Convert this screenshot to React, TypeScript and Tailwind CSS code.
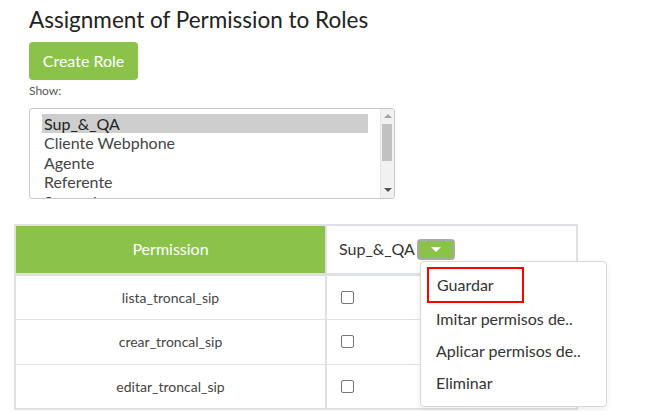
import React from "react";

const rows = ["lista_troncal_sip", "crear_troncal_sip", "editar_troncal_sip"];
const roles = ["Sup_&_QA", "Cliente Webphone", "Agente", "Referente", "Supervisor"];

export default function App() {
  return (
    <div className="w-[645px] h-[411px] overflow-hidden bg-white text-[#333]" style={{ fontFamily: "Lato, 'Open Sans', sans-serif" }}>
      <div className="pl-[29px] pt-[6px]">
        <h1 className="text-[22.5px] leading-[28px] text-[#222] font-normal">Assignment of Permission to Roles</h1>
        <button className="mt-[8px] h-[38px] w-[109px] rounded-[4px] bg-[#8bc34a] text-white text-[16px]">Create Role</button>
        <div className="mt-[2px] text-[12px] leading-[18px] text-[#555]">Show:</div>
        <div className="mt-[8px] relative w-[366px] h-[91px] border border-[#c8c8c8] rounded-[3px] overflow-hidden bg-white">
          <div className="pl-[12px] pr-[26px] pt-[5px]">
            {roles.map((r, i) => (
              <div key={r} className={`h-[19.4px] leading-[19.4px] text-[16px] pl-[2px] ${i === 0 ? "bg-[#cecece] text-[#222]" : "text-[#444]"}`}>{r}</div>
            ))}
          </div>
          <div className="absolute right-0 top-0 bottom-0 w-[14px] bg-[#f1f1f1] border-l border-[#e6e6e6]">
            <div className="absolute left-[3px] top-[5px] w-0 h-0 border-l-[4px] border-r-[4px] border-b-[4px] border-l-transparent border-r-transparent border-b-[#a3a3a3]" />
            <div className="absolute left-[1px] top-[15px] w-[10px] h-[37px] bg-[#c1c1c1]" />
            <div className="absolute left-[3px] bottom-[6px] w-0 h-0 border-l-[4px] border-r-[4px] border-t-[4px] border-l-transparent border-r-transparent border-t-[#505050]" />
          </div>
        </div>
      </div>

      <div className="relative ml-[14px] mt-[25px] w-[564px]">
        <table className="w-full border-collapse border-2 border-[#dee2e6]">
          <thead>
            <tr>
              <th className="w-[311px] h-[49px] bg-[#8bc34a] text-white text-[16px] font-normal border-2 border-[#dee2e6] border-b-[3px]">Permission</th>
              <th className="h-[49px] text-left pl-[12px] font-normal text-[16px] border-2 border-[#dee2e6] border-b-[3px]">
                <div className="flex items-center">
                  <span className="text-[#333]">Sup_&amp;_QA</span>
                  <span className="ml-[2px] w-[38px] h-[21px] rounded-[4px] border-2 border-[#a9a9a9] bg-[#8bc34a] flex items-center justify-center">
                    <span className="w-0 h-0 border-l-[5px] border-r-[5px] border-t-[5px] border-l-transparent border-r-transparent border-t-white" />
                  </span>
                </div>
              </th>
            </tr>
          </thead>
          <tbody>
            {rows.map((r) => (
              <tr key={r}>
                <td className="h-[45px] text-center text-[14px] text-[#444] border-2 border-[#dee2e6] border-t-0 border-b-[1px]">{r}</td>
                <td className="h-[45px] pl-[14px] border-2 border-[#dee2e6] border-t-0 border-b-[1px]">
                  <span className="block w-[13px] h-[13px] border border-[#767676] rounded-[2px] bg-white" />
                </td>
              </tr>
            ))}
          </tbody>
        </table>

        <div className="absolute left-[406px] top-[37px] w-[187px] h-[146px] bg-white border border-[#d9d9d9] rounded-[4px] shadow-[0_2px_6px_rgba(0,0,0,0.08)] text-[16px] text-[#333]">
          <div className="mt-[5px] ml-[6px] w-[97px] h-[36px] border-2 border-[#ff0000] flex items-center pl-[8px]">Guardar</div>
          <div className="pl-[15px] h-[32px] flex items-center">Imitar permisos de..</div>
          <div className="pl-[15px] h-[32px] flex items-center">Aplicar permisos de..</div>
          <div className="pl-[15px] h-[31px] flex items-center">Eliminar</div>
        </div>
      </div>
    </div>
  );
}
